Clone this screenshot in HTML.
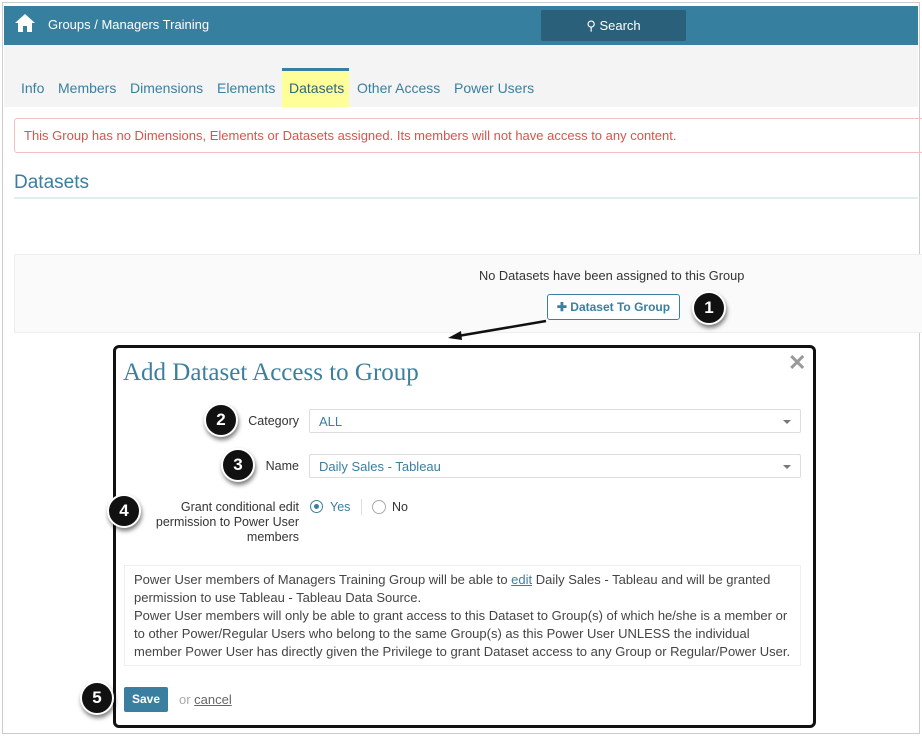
<!DOCTYPE html><html><head><style>
body{margin:0;width:922px;height:736px;background:#fff;font-family:"Liberation Sans",sans-serif;position:relative;overflow:hidden}
.a{position:absolute}
.t{position:absolute;top:80px;font-size:14px;color:#3a7fa0}
.c{position:absolute;width:30px;height:30px;border-radius:50%;background:#111;border:2px solid #fff;box-shadow:1px 3px 4px rgba(0,0,0,.5);color:#fff;font-weight:bold;font-size:17px;text-align:center;line-height:30px}
.sel{position:absolute;left:309px;height:24px;border:1px solid #ddd;border-radius:2px;color:#3a7fa0;font-size:13px;line-height:23px;padding-left:9px;box-sizing:border-box;width:492px}
.sel:after{content:"";position:absolute;right:9px;top:10px;border:4px solid transparent;border-top:4px solid #777}
.lab{position:absolute;font-size:12.5px;color:#333;text-align:right;right:623px}
</style></head><body>
<div class="a" style="left:2px;top:2px;width:916px;height:730px;border:1px solid #ccc"></div>
<div class="a" style="left:4px;top:6px;width:914px;height:39px;background:#377f9f"></div>
<svg class="a" style="left:14px;top:13px" width="22" height="20" viewBox="0 0 22 20"><path d="M11 1L1 10h3v9h5v-6h4v6h5v-9h3z" fill="#fff"/></svg>
<div class="a" style="left:48px;top:17px;color:#fff;font-size:13px">Groups / Managers Training</div>
<div class="a" style="left:541px;top:10px;width:145px;height:31px;background:#2a6079;border-radius:2px;color:#fff;font-size:13px;line-height:31px;text-align:center">&#9906;&#xFE0E; Search</div>
<div class="a" style="left:4px;top:45px;width:914px;height:62px;background:#f4f4f4"></div>
<div class="a" style="left:282px;top:68px;width:67px;height:39px;background:#ffff99;border-top:3px solid #377f9f;box-sizing:border-box"></div>
<span class="t" style="left:21px">Info</span><span class="t" style="left:58px">Members</span><span class="t" style="left:130px">Dimensions</span><span class="t" style="left:217px">Elements</span><span class="t" style="left:289px;color:#2c6680">Datasets</span><span class="t" style="left:357px">Other Access</span><span class="t" style="left:454px">Power Users</span>
<div class="a" style="left:14px;top:118px;width:910px;height:35px;border:1px solid #f2c0c0;border-radius:3px;box-sizing:border-box"></div>
<div class="a" style="left:24px;top:128px;font-size:13px;color:#d9534f">This Group has no Dimensions, Elements or Datasets assigned. Its members will not have access to any content.</div>
<div class="a" style="left:14px;top:172px;font-size:19px;color:#3a7fa0">Datasets</div>
<div class="a" style="left:14px;top:197px;width:904px;height:2px;background:#dfeef2"></div>
<div class="a" style="left:14px;top:254px;width:910px;height:79px;background:#fafafa;border:1px solid #eee;box-sizing:border-box"></div>
<div class="a" style="left:479px;top:268px;font-size:12.8px;color:#333">No Datasets have been assigned to this Group</div>
<div class="a" style="left:547px;top:294px;width:133px;height:26px;border:1px solid #3a7fa0;border-radius:3px;box-sizing:border-box;background:#fff;color:#3a7fa0;font-weight:bold;font-size:12px;line-height:24px;text-align:center">&#10010; Dataset To Group</div>
<div class="c" style="left:692px;top:291px">1</div>
<svg class="a" style="left:0;top:0" width="922" height="736"><line x1="546" y1="321" x2="458" y2="336" stroke="#111" stroke-width="2.5"/><path d="M448 338l13-7 1 9z" fill="#111"/></svg>
<div class="a" style="left:113px;top:345px;width:703px;height:383px;border:3px solid #111;border-radius:6px;box-sizing:border-box;background:#fff"></div>
<div class="a" style="left:123px;top:359px;font-family:'Liberation Serif',serif;font-size:25px;color:#3a7fa0">Add Dataset Access to Group</div>
<div class="a" style="left:788px;top:350px;font-size:22px;color:#999;font-weight:bold">&#10005;</div>
<div class="lab" style="top:414px">Category</div>
<div class="sel" style="top:409px">ALL</div>
<div class="c" style="left:204px;top:403px">2</div>
<div class="lab" style="top:459px">Name</div>
<div class="sel" style="top:454px">Daily Sales - Tableau</div>
<div class="c" style="left:221px;top:448px">3</div>
<div class="lab" style="top:500px;line-height:15px">Grant conditional edit<br>permission to Power User<br>members</div>
<div class="a" style="left:310px;top:500px;width:11px;height:11px;border:1px solid #3a7fa0;border-radius:50%"></div>
<div class="a" style="left:314px;top:504px;width:5px;height:5px;background:#3a7fa0;border-radius:50%"></div>
<div class="a" style="left:330px;top:500px;font-size:12.5px;color:#3a7fa0">Yes</div>
<div class="a" style="left:361px;top:499px;width:1px;height:16px;background:#ddd"></div>
<div class="a" style="left:372px;top:500px;width:12px;height:12px;border:1px solid #aaa;border-radius:50%"></div>
<div class="a" style="left:392px;top:500px;font-size:12.5px;color:#333">No</div>
<div class="c" style="left:107px;top:494px">4</div>
<div class="a" style="left:124px;top:565px;width:677px;height:101px;border:1px solid #eee;box-sizing:border-box;padding:5px 9px;font-size:13px;line-height:18px;color:#444;white-space:nowrap">Power User members of Managers Training Group will be able to <u style="color:#3a7fa0">edit</u> Daily Sales - Tableau and will be granted<br>permission to use Tableau - Tableau Data Source.<br>Power User members will only be able to grant access to this Dataset to Group(s) of which he/she is a member or<br>to other Power/Regular Users who belong to the same Group(s) as this Power User UNLESS the individual<br>member Power User has directly given the Privilege to grant Dataset access to any Group or Regular/Power User.</div>
<div class="a" style="left:124px;top:687px;width:44px;height:25px;background:#3a7fa0;border-radius:2px;color:#fff;font-weight:bold;font-size:12px;line-height:25px;text-align:center">Save</div>
<div class="a" style="left:179px;top:692px;font-size:13px;color:#aaa">or <u style="color:#666">cancel</u></div>
<div class="c" style="left:80px;top:681px">5</div>
</body></html>
